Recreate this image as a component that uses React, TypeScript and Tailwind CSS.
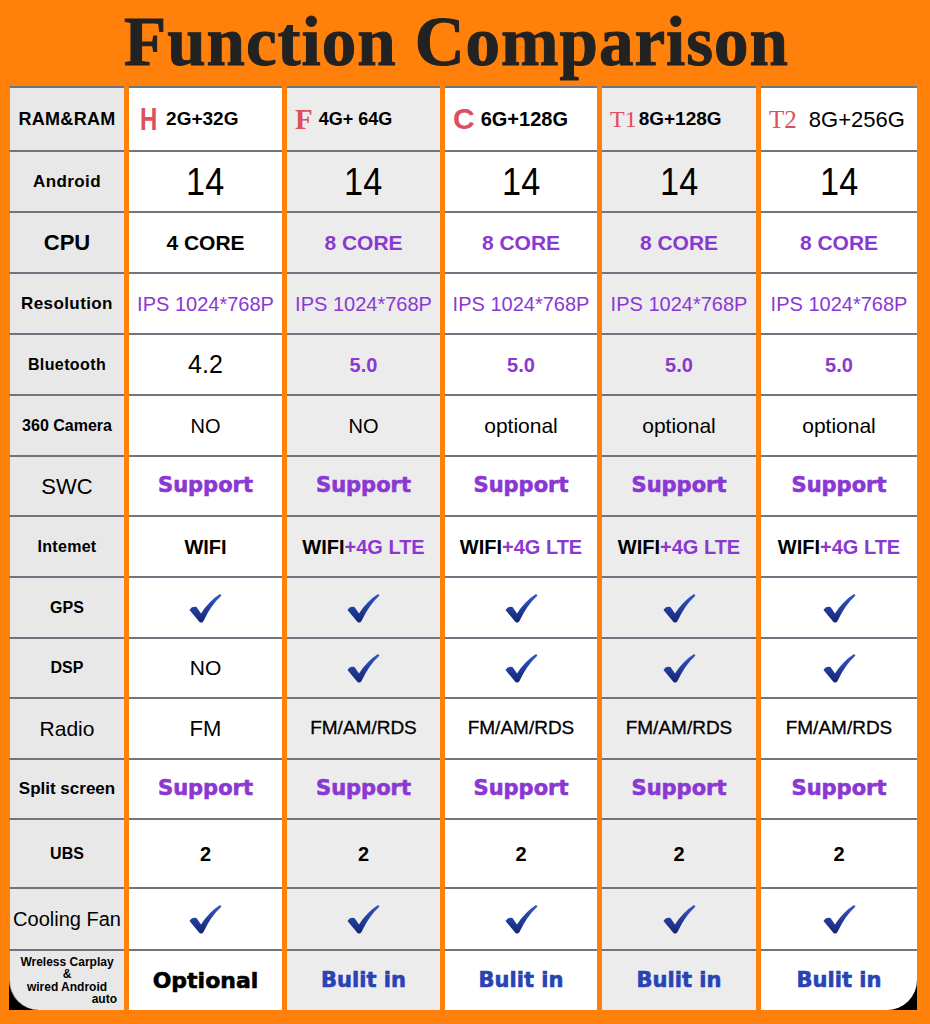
import type { ReactNode } from "react";

const sans = "font-['Liberation_Sans',Arial,sans-serif]";
const heavy = "font-['DejaVu_Sans',sans-serif] font-bold [-webkit-text-stroke:0.6px_currentColor]";
const purple = "text-[#8b38d3]";
const red = "text-[#dc4f5c]";

const colBg = ["bg-[#e8e8e8]", "bg-white", "bg-[#ececec]", "bg-white", "bg-[#ececec]", "bg-white"];

const Check = () => (
  <svg width="33" height="30" viewBox="0 0 33 30">
    <defs>
      <linearGradient id="ck" x1="0" y1="0" x2="0" y2="1">
        <stop offset="0" stopColor="#3356c8" />
        <stop offset="1" stopColor="#142673" />
      </linearGradient>
    </defs>
    <path d="M0.5 17 Q3 12.5 7.5 14 L12 20.5 Q20 8 31 1 L32.5 2.5 Q22 12 14.5 28 Q13 30.5 10.5 29 Z" fill="url(#ck)" />
  </svg>
);

const Head = ({ mark, markCls, text, textCls }: { mark: string; markCls: string; text: string; textCls: string }) => (
  <div className="flex items-center gap-[6px]">
    <span className={markCls}>{mark}</span>
    <span className={`${sans} ${textCls}`}>{text}</span>
  </div>
);

const Plain = ({ c, children }: { c: string; children: ReactNode }) => <span className={`${sans} ${c}`}>{children}</span>;

const Big14 = () => <span className={`${sans} inline-block scale-x-90 text-[38px] leading-none text-black`}>14</span>;
const Core8 = () => <Plain c={`text-[21px] font-bold ${purple}`}>8 CORE</Plain>;
const Ips = () => <Plain c={`text-[20px] ${purple}`}>IPS 1024*768P</Plain>;
const Bt5 = () => <Plain c={`text-[20px] font-bold ${purple}`}>5.0</Plain>;
const Opt = () => <Plain c="text-[21px] text-black">optional</Plain>;
const Sup = () => <span className={`${heavy} text-[21px] ${purple}`}>Support</span>;
const Lte = () => (
  <span className={`${sans} text-[20px] font-bold whitespace-nowrap text-black`}>
    WIFI<span className={purple}>+4G LTE</span>
  </span>
);
const Fmr = () => <Plain c="text-[19px] text-black [-webkit-text-stroke:0.3px_currentColor]">FM/AM/RDS</Plain>;
const Two = () => <Plain c="text-[20px] font-bold text-black">2</Plain>;
const Built = () => <span className={`${heavy} text-[21px] text-[#2a43b4]`}>Bulit in</span>;

interface Row {
  label: ReactNode;
  cells: ReactNode[];
  head?: boolean;
}

const rows: Row[] = [
  {
    head: true,
    label: <Plain c="text-[18px] font-bold text-black tracking-[0.3px]">RAM&amp;RAM</Plain>,
    cells: [
      <Head mark="H" markCls={`${sans} ${red} inline-block scale-x-75 text-[32px] font-bold leading-none`} text="2G+32G" textCls="text-[19px] font-bold" />,
      <Head mark="F" markCls={`font-['Liberation_Serif',serif] font-bold ${red} text-[29px] leading-none`} text="4G+ 64G" textCls="text-[18px] font-bold" />,
      <Head mark="C" markCls={`${sans} ${red} text-[30px] font-bold leading-none`} text="6G+128G" textCls="text-[20px] font-bold" />,
      <Head mark="T1" markCls={`font-['Liberation_Serif',serif] ${red} text-[24px] leading-none -mr-[4px]`} text="8G+128G" textCls="text-[19px] font-bold" />,
      <Head mark="T2" markCls={`font-['Liberation_Serif',serif] ${red} text-[25px] leading-none mr-[6px]`} text="8G+256G" textCls="text-[22px]" />,
    ],
  },
  { label: <Plain c="text-[17px] font-bold text-black tracking-[0.4px]">Android</Plain>, cells: [<Big14 />, <Big14 />, <Big14 />, <Big14 />, <Big14 />] },
  {
    label: <Plain c="text-[22px] font-bold text-black">CPU</Plain>,
    cells: [<Plain c="text-[21px] font-bold text-black">4 CORE</Plain>, <Core8 />, <Core8 />, <Core8 />, <Core8 />],
  },
  { label: <Plain c="text-[17px] font-bold text-black tracking-[0.4px]">Resolution</Plain>, cells: [<Ips />, <Ips />, <Ips />, <Ips />, <Ips />] },
  {
    label: <Plain c="text-[16px] font-bold text-black tracking-[0.4px]">Bluetooth</Plain>,
    cells: [<Plain c="text-[25px] text-black">4.2</Plain>, <Bt5 />, <Bt5 />, <Bt5 />, <Bt5 />],
  },
  {
    label: <Plain c="text-[16px] font-bold text-black">360 Camera</Plain>,
    cells: [<Plain c="text-[20px] text-black">NO</Plain>, <Plain c="text-[20px] text-black">NO</Plain>, <Opt />, <Opt />, <Opt />],
  },
  { label: <Plain c="text-[22px] text-black">SWC</Plain>, cells: [<Sup />, <Sup />, <Sup />, <Sup />, <Sup />] },
  {
    label: <Plain c="text-[16px] font-bold text-black tracking-[0.3px]">Intemet</Plain>,
    cells: [<Plain c="text-[20px] font-bold text-black">WIFI</Plain>, <Lte />, <Lte />, <Lte />, <Lte />],
  },
  { label: <Plain c="text-[16px] font-bold text-black">GPS</Plain>, cells: [<Check />, <Check />, <Check />, <Check />, <Check />] },
  {
    label: <Plain c="text-[16px] font-bold text-black">DSP</Plain>,
    cells: [<Plain c="text-[21px] text-black">NO</Plain>, <Check />, <Check />, <Check />, <Check />],
  },
  {
    label: <Plain c="text-[21px] text-black">Radio</Plain>,
    cells: [<Plain c="text-[22px] text-black">FM</Plain>, <Fmr />, <Fmr />, <Fmr />, <Fmr />],
  },
  { label: <Plain c="text-[17px] font-bold text-black">Split screen</Plain>, cells: [<Sup />, <Sup />, <Sup />, <Sup />, <Sup />] },
  { label: <Plain c="text-[16px] font-bold text-black">UBS</Plain>, cells: [<Two />, <Two />, <Two />, <Two />, <Two />] },
  { label: <Plain c="text-[20px] text-black">Cooling Fan</Plain>, cells: [<Check />, <Check />, <Check />, <Check />, <Check />] },
  {
    label: (
      <div className={`${sans} w-full px-[3px] text-[12px] font-bold leading-[12.5px] text-black`}>
        <div className="text-center whitespace-nowrap">Wreless Carplay</div>
        <div className="text-center">&amp;</div>
        <div className="text-center whitespace-nowrap">wired Android</div>
        <div className="text-right pr-[4px]">auto</div>
      </div>
    ),
    cells: [<span className={`${heavy} text-[22px] text-black`}>Optional</span>, <Built />, <Built />, <Built />, <Built />],
  },
];

export default function App() {
  return (
    <div className="h-[1024px] w-[930px] overflow-hidden bg-[#ff800a]">
      <div className="flex h-[86px] justify-center pr-[17px] pt-[8px]">
        <h1 className="font-['Liberation_Serif',serif] text-[69px] font-bold leading-[69px] tracking-[1px] text-[#222] [-webkit-text-stroke:1px_#222]">
          Function Comparison
        </h1>
      </div>

      <div className="pl-[9px]">
        <div className="grid grid-cols-[115px_153px_153px_152px_154px_156px] grid-rows-[64px_61px_61px_61px_61px_61px_60px_61px_61px_60px_61px_60px_69px_62px_61px] gap-x-[5px]">
          {rows.map((row, r) => {
            const last = r === rows.length - 1;
            return [row.label, ...row.cells].map((cell, c) => {
              const cornerL = last && c === 0;
              const cornerR = last && c === 5;
              return (
                <div key={`${r}-${c}`} className={cornerL || cornerR ? "bg-black" : ""}>
                  <div
                    className={`flex h-full items-center border-t-2 border-[#6e757e] ${colBg[c]} ${
                      row.head && c > 0 ? "justify-start pl-[8px]" : "justify-center"
                    } ${c === 0 ? "border-l border-l-[#9a9a9a]" : ""} ${cornerL ? "rounded-bl-[30px]" : ""} ${
                      cornerR ? "rounded-br-[30px]" : ""
                    }`}
                  >
                    {cell}
                  </div>
                </div>
              );
            });
          })}
        </div>
      </div>
    </div>
  );
}
